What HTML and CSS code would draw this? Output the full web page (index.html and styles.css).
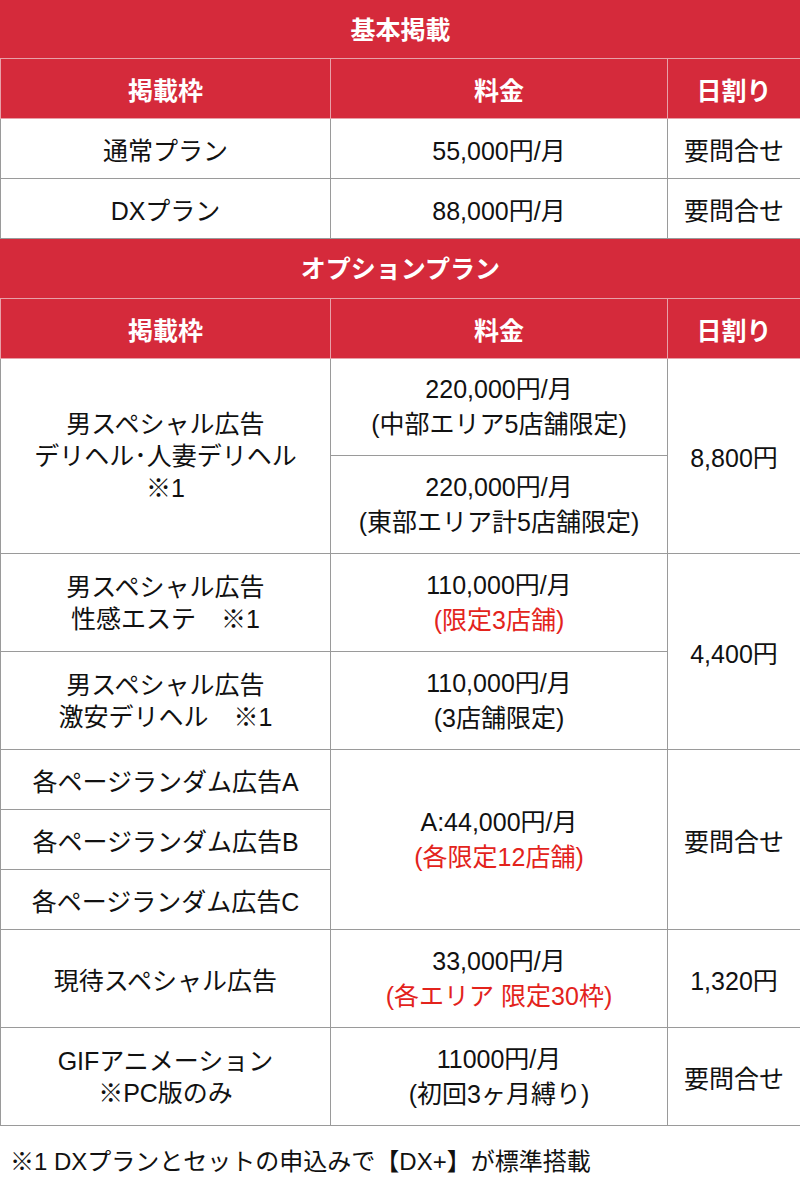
FILE: index.html
```html
<!DOCTYPE html>
<html lang="ja">
<head>
<meta charset="utf-8">
<link rel="stylesheet" href="styles.css">
</head>
<body>
<table class="price">
  <colgroup>
    <col class="c1"><col class="c2"><col class="c3">
  </colgroup>
  <tr class="r0"><th colspan="3" class="title">基本掲載</th></tr>
  <tr class="r1"><th>掲載枠</th><th>料金</th><th>日割り</th></tr>
  <tr class="r1"><td>通常プラン</td><td>55,000円/月</td><td>要問合せ</td></tr>
  <tr class="r1"><td>DXプラン</td><td>88,000円/月</td><td>要問合せ</td></tr>
  <tr class="r1"><th colspan="3" class="title">オプションプラン</th></tr>
  <tr class="r1"><th>掲載枠</th><th>料金</th><th>日割り</th></tr>
  <tr class="r2a">
    <td rowspan="2" class="name">男スペシャル広告<br>デリヘル･人妻デリヘル<br>※1</td>
    <td class="fee">220,000円/月<br>(中部エリア5店舗限定)</td>
    <td rowspan="2">8,800円</td>
  </tr>
  <tr class="r2"><td class="fee">220,000円/月<br>(東部エリア計5店舗限定)</td></tr>
  <tr class="r2">
    <td class="name">男スペシャル広告<br>性感エステ　※1</td>
    <td class="fee">110,000円/月<br><span class="red">(限定3店舗)</span></td>
    <td rowspan="2">4,400円</td>
  </tr>
  <tr class="r2">
    <td class="name">男スペシャル広告<br>激安デリヘル　※1</td>
    <td class="fee">110,000円/月<br>(3店舗限定)</td>
  </tr>
  <tr class="r1">
    <td>各ページランダム広告A</td>
    <td rowspan="3" class="fee">A:44,000円/月<br><span class="red">(各限定12店舗)</span></td>
    <td rowspan="3">要問合せ</td>
  </tr>
  <tr class="r1"><td>各ページランダム広告B</td></tr>
  <tr class="r1"><td>各ページランダム広告C</td></tr>
  <tr class="r2">
    <td>現待スペシャル広告</td>
    <td class="fee">33,000円/月<br><span class="red">(各エリア 限定30枠)</span></td>
    <td>1,320円</td>
  </tr>
  <tr class="r2">
    <td class="name">GIFアニメーション<br>※PC版のみ</td>
    <td class="fee">11000円/月<br>(初回3ヶ月縛り)</td>
    <td>要問合せ</td>
  </tr>
</table>
<p class="note">※1 DXプランとセットの申込みで【DX+】が標準搭載</p>
</body>
</html>
```

FILE: styles.css
```css
html, body {
  margin: 0;
  padding: 0;
  background: #ffffff;
}
body {
  font-family: "Liberation Sans", Arial, "Noto Sans CJK JP", sans-serif;
  color: #111111;
}
.price {
  width: 800px;
  border-collapse: collapse;
  table-layout: fixed;
  font-size: 25px;
}
.c1 { width: 330px; }
.c2 { width: 337px; }
.c3 { width: 133px; }
.price th,
.price td {
  border: 1px solid #9a9a9a;
  text-align: center;
  vertical-align: middle;
  padding: 0;
}
.price th {
  background: #d52a3b;
  color: #ffffff;
  font-weight: bold;
  border-color: #e8a0a8;
}
.price th.title {
  border-left-color: #d52a3b;
  border-right-color: #d52a3b;
  padding-bottom: 4px;
}
.price .r0 th {
  border-top-color: #d52a3b;
}
.r0 { height: 58px; }
.r1 { height: 60px; }
.r2 { height: 98px; }
.r2a { height: 97px; }
.name { line-height: 32px; }
.fee { line-height: 35px; }
.red { color: #e3231c; }
.note {
  margin: 22px 0 0 10px;
  font-size: 24px;
  line-height: 28px;
  color: #111111;
}
```
